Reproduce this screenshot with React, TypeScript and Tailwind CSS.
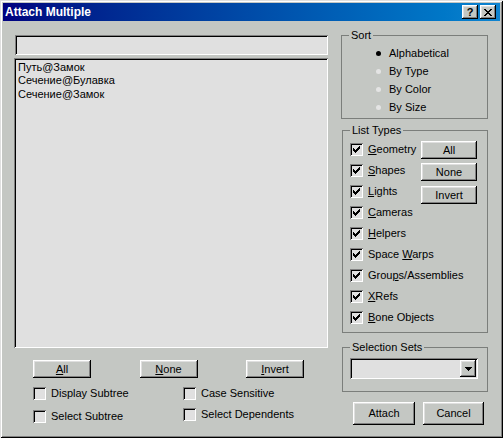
import React from 'react';

const raised =
  'shadow-[inset_-1px_-1px_0_#000,inset_1px_1px_0_#fff,inset_-2px_-2px_0_#808080,inset_2px_2px_0_#dfdfdf]';
const sunken =
  'shadow-[inset_1px_1px_0_#808080,inset_-1px_-1px_0_#fff,inset_2px_2px_0_#000,inset_-2px_-2px_0_#dfdfdf]';

// text with an underlined mnemonic letter
function Mn({ text, at }: { text: string; at: number }) {
  if (at < 0) return <>{text}</>;
  return (
    <>
      {text.slice(0, at)}
      <span className="underline underline-offset-[1px]">{text[at]}</span>
      {text.slice(at + 1)}
    </>
  );
}

function Button({ label, at = -1, className = '' }: { label: string; at?: number; className?: string }) {
  return (
    <div className={`flex items-center justify-center bg-[#c4c7c3] ${raised} ${className}`}>
      <span className="leading-[13px]">
        <Mn text={label} at={at} />
      </span>
    </div>
  );
}

function CheckBox({ label, at = -1, checked = false }: { label: string; at?: number; checked?: boolean }) {
  return (
    <div className="flex h-[13px] items-center gap-[5px] whitespace-nowrap">
      <div className={`relative h-[13px] w-[13px] shrink-0 bg-[#e0e0e0] ${sunken}`}>
        {checked && (
          <svg className="absolute left-[3px] top-[3px]" width="7" height="7" viewBox="0 0 7 7" shapeRendering="crispEdges">
            <path d="M0 2h1v3H0z M1 3h1v3H1z M2 4h1v3H2z M3 3h1v3H3z M4 2h1v3H4z M5 1h1v3H5z M6 0h1v3H6z" fill="#000" />
          </svg>
        )}
      </div>
      <span className="leading-[13px]">
        <Mn text={label} at={at} />
      </span>
    </div>
  );
}

function Group({ title, className = '', children }: { title: string; className?: string; children?: React.ReactNode }) {
  return (
    <div className={`relative border border-[#7b7e7b] ${className}`}>
      <span className="absolute left-[7px] top-[-7px] bg-[#c4c7c3] px-[2px] leading-[13px]">{title}</span>
      {children}
    </div>
  );
}

function Radio({ label, selected = false }: { label: string; selected?: boolean }) {
  return (
    <div className="flex h-[18px] items-center pl-[34px]">
      <div className={`h-[5px] w-[5px] rounded-full ${selected ? 'bg-black' : 'bg-[#e4e4e4]'}`} />
      <span className="ml-[8px] leading-[13px]">{label}</span>
    </div>
  );
}

const listTypes: [string, number][] = [
  ['Geometry', 0],
  ['Shapes', 0],
  ['Lights', 0],
  ['Cameras', 0],
  ['Helpers', 0],
  ['Space Warps', 6],
  ['Groups/Assemblies', 4],
  ['XRefs', 0],
  ['Bone Objects', 0],
];

const objects = ['Путь@Замок', 'Сечение@Булавка', 'Сечение@Замок'];

export default function App() {
  return (
    <div
      className={`h-[438px] w-[503px] overflow-hidden bg-[#c4c7c3] p-[3px] text-[11px] text-black font-['Liberation_Sans',Arial,sans-serif] shadow-[inset_1px_1px_0_#dfdfdf,inset_-1px_-1px_0_#000,inset_2px_2px_0_#fff,inset_-2px_-2px_0_#808080]`}
    >
      {/* Title bar */}
      <div className="flex h-[18px] items-center bg-gradient-to-r from-[#000080] to-[#1084d0] pl-[2px] pr-[4px]">
        <span className="flex-1 text-[12px] font-bold leading-[14px] text-white">Attach Multiple</span>
        <div className={`flex h-[14px] w-[16px] items-center justify-center bg-[#c4c7c3] ${raised}`}>
          <span className="text-[11px] font-bold leading-[11px]">?</span>
        </div>
        <div className={`ml-[2px] flex h-[14px] w-[16px] items-center justify-center bg-[#c4c7c3] ${raised}`}>
          <svg width="8" height="7" viewBox="0 0 8 7" shapeRendering="crispEdges">
            <path
              d="M0 0h2v1H0z M6 0h2v1H6z M1 1h2v1H1z M5 1h2v1H5z M2 2h4v1H2z M3 3h2v1H3z M2 4h4v1H2z M1 5h2v1H1z M5 5h2v1H5z M0 6h2v1H0z M6 6h2v1H6z"
              fill="#000"
            />
          </svg>
        </div>
      </div>

      {/* Body */}
      <div className="flex gap-[13px] pl-[11px] pt-[14px]">
        {/* Left column */}
        <div className="flex w-[314px] flex-col">
          <div className={`ml-[1px] h-[20px] w-[313px] bg-[#e0e0e0] ${sunken}`} />
          <div className={`mt-[3px] h-[290px] w-[314px] bg-[#e0e0e0] pl-[4px] pt-[3px] ${sunken}`}>
            {objects.map((o) => (
              <div key={o} className="leading-[13.3px]">
                {o}
              </div>
            ))}
          </div>
          <div className="mt-[12px] flex justify-between pl-[19px] pr-[24px]">
            <Button label="All" at={0} className="h-[18px] w-[58px]" />
            <Button label="None" at={0} className="h-[18px] w-[58px]" />
            <Button label="Invert" at={0} className="h-[18px] w-[58px]" />
          </div>
          <div className="mt-[9px] flex pl-[19px]">
            <div className="flex w-[150px] flex-col gap-[10px]">
              <CheckBox label="Display Subtree" />
              <CheckBox label="Select Subtree" />
            </div>
            <div className="flex flex-col gap-[8px]">
              <CheckBox label="Case Sensitive" />
              <CheckBox label="Select Dependents" />
            </div>
          </div>
        </div>

        {/* Right column */}
        <div className="flex w-[147px] flex-col">
          <Group title="Sort" className="h-[84px] pt-[8px]">
            <Radio label="Alphabetical" selected />
            <Radio label="By Type" />
            <Radio label="By Color" />
            <Radio label="By Size" />
          </Group>

          <Group title="List Types" className="ml-[1px] mt-[11px] flex h-[203px]">
            <div className="flex w-[78px] flex-col gap-[8px] pl-[7px] pt-[12px]">
              {listTypes.map(([t, at]) => (
                <CheckBox key={t} label={t} at={at} checked />
              ))}
            </div>
            <div className="flex flex-col pt-[10px]">
              <Button label="All" className="h-[18px] w-[56px]" />
              <Button label="None" className="mt-[4px] h-[18px] w-[56px]" />
              <Button label="Invert" className="mt-[5px] h-[18px] w-[56px]" />
            </div>
          </Group>

          <Group title="Selection Sets" className="ml-[1px] mt-[14px] h-[45px] pl-[7px] pt-[10px]">
            <div className={`flex h-[21px] w-[128px] items-center justify-end bg-[#e0e0e0] pr-[2px] ${sunken}`}>
              <div className={`flex h-[17px] w-[16px] items-center justify-center bg-[#c4c7c3] ${raised}`}>
                <svg width="7" height="4" viewBox="0 0 7 4" shapeRendering="crispEdges">
                  <path d="M0 0h7v1H0z M1 1h5v1H1z M2 2h3v1H2z M3 3h1v1H3z" fill="#000" />
                </svg>
              </div>
            </div>
          </Group>

          <div className="ml-[12px] mt-[10px] flex gap-[8px]">
            <Button label="Attach" className="h-[23px] w-[62px]" />
            <Button label="Cancel" className="h-[23px] w-[61px]" />
          </div>
        </div>
      </div>
    </div>
  );
}
